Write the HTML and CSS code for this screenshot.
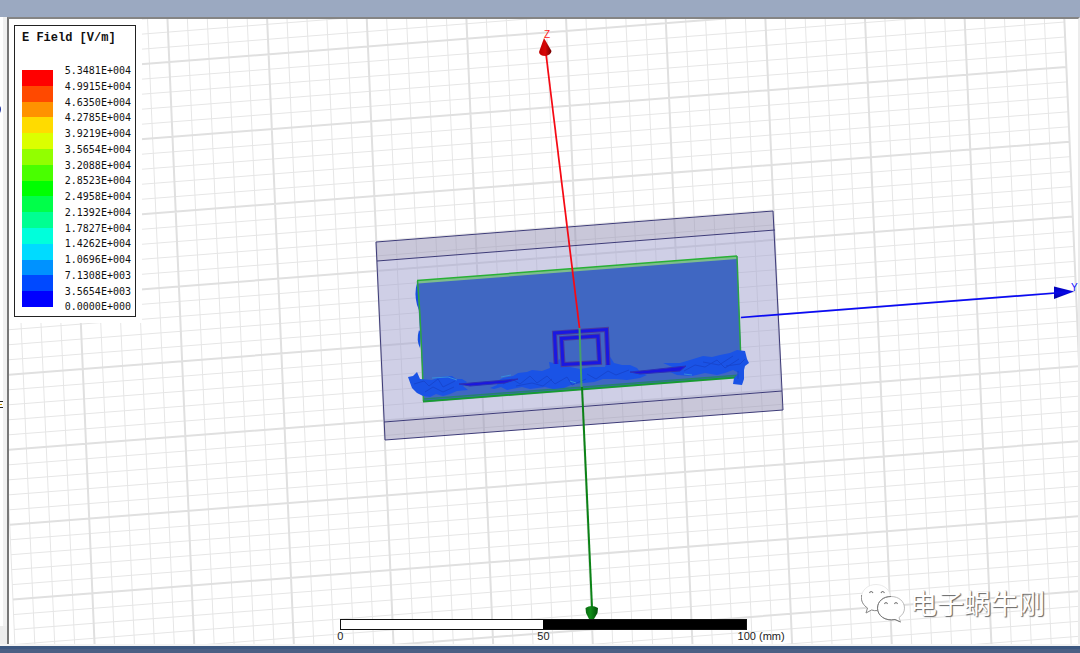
FILE: index.html
```html
<!DOCTYPE html>
<html lang="zh">
<head>
<meta charset="utf-8">
<title>E Field</title>
<link rel="stylesheet" href="styles.css">
</head>
<body>
<div class="app">
  <header class="titlebar"></header>
  <div class="work">
    <aside class="dock">
      <svg class="dock-marks" width="7" height="625" viewBox="0 19 7 625" aria-hidden="true">
        <path d="M0 106q2 3 0 7z" fill="#1c2f9c"/><path d="M0 401.500h3M0 407.500h3" stroke="#222"/><path d="M0 404.500h2" stroke="#c90"/>
        <path d="M0 626h7v18H0z" fill="#ededed"/>
      </svg>
    </aside>
    <main class="viewport">
      <svg class="scene" viewBox="9 19 1069 625" preserveAspectRatio="xMidYMid slice" role="img" aria-label="E field model">
        <defs>
          <linearGradient id="redCone"><stop offset="0" stop-color="#c00000"/><stop offset=".5" stop-color="#d80808"/><stop offset="1" stop-color="#700000"/></linearGradient>
          <linearGradient id="greenCone"><stop offset="0" stop-color="#0a6a10"/><stop offset=".4" stop-color="#108c18"/><stop offset="1" stop-color="#03500a"/></linearGradient>
          <linearGradient id="blueCone" x2="0" y2="1"><stop offset="0" stop-color="#0000b0"/><stop offset=".5" stop-color="#0808e8"/><stop offset="1" stop-color="#000090"/></linearGradient>
        </defs>
        <path id="minor" class="grid-minor"/>
        <path id="major" class="grid-major"/>
        <path fill="#fff" d="M9 19H142V323H9z"/>

        <path d="M376 242L773 211L775 230L377 261z M384 422L782 391L783 410L385 440z" fill="#938fb3" fill-opacity=".5"/>
        <path d="M377 261L775 230L782 391L384 422z" fill="#9f9fcd" fill-opacity=".5"/>
        <path class="box-edge" d="M376 242L773 211L783 410L385 440z M377 261L775 230M384 422L782 391"/>

        <path d="M417 283q-3 10 0 22l2 5v-25z M419 330q-3 10 1 18l1-15z" fill="#164fe0"/>
        <path d="M417 281L737 256L742 377L424 402z" fill="#4067c2"/>
        <path d="M418 282L737 257.500" stroke="#7dbd8c" stroke-width="3" fill="none"/>
        <path d="M417 280.500L737 256" stroke="#28b035" stroke-width="1.500" fill="none"/>
        <path d="M417.500 281Q421 320 423.500 401M737 256L741.500 377" stroke="#2ba442" stroke-width="1.500" fill="none"/>
        <path d="M424 399L741 375" stroke="#267f72" stroke-width="1.500"/>
        <path d="M423 401.500L742 377" stroke="#179b32" stroke-width="2"/>

        <g fill="#1a53e6">
          <path d="M408 377L413 376L417 372L420 379L432 380L440 377L452 376L456 379L462 379L467 382L463 386L468 390L457 391L450 394L443 396L436 394L430 397L423 396L417 393L412 388z"/>
          <path d="M490 388L497 385L499 380L503 378L513 376L518 373L527 372L532 370L542 371L550 368L549 362L554 363L560 359L561 366L570 367L580 369L592 367L605 367L609 355L614 363L622 365L630 365L637 368L641 373L647 375L640 378L627 380L615 379L603 379L594 382L583 383L573 384L564 388L553 389L545 387L530 389L522 387L507 390L501 387L494 389z"/>
          <path d="M663 363L680 363L690 360L703 356L712 357L720 355L730 353L737 350L745 351L747 359L749 363L745 366L744 370L744 379L742 385L733 384L734 378L739 373L733 370L725 373L717 375L705 373L692 376L677 375L670 372L677 369z"/>
        </g>
        <g class="facets">
          <path d="M414 384l10-3 5 5 9-7 5 8 12-6M425 392l8-5 10 5 11-5M503 384l9-5 8 5 10-8 7 7 10-7 8 8 12-7 5 8 14-6M516 386l16-3 11 3 9-7M587 374l9 5 12-8 8 4 13-5M684 371l11-6 10 2 12-7 8 8 14-9M703 362l16 3 14-9M726 366l14-2 5-5M738 379v-8"/>
        </g>
        <path d="M432 378l16-1 9 3M501 377l10-2M570 381l6 2M684 374l8 1" stroke="#378ddb" fill="none"/>
        <path d="M459 384L482 382L518 379L505 383L470 386z M630 372L650 370L686 366L680 371L640 374z" fill="#1b16df" stroke="#2c32b6"/>

        <g fill="none">
          <path class="coil-edge" d="M556 364L554.500 333L606.500 329.500L608 365M563 364.500L561.500 338.500L598 336L599.500 362.500z"/>
          <path class="coil" d="M556 364L554.500 333L606.500 329.500L608 365M563 364.500L561.500 338.500L598 336L599.500 362.500z"/>
        </g>
        <path d="M579.500 328L581.500 387" stroke="#45a069" stroke-width="2"/>
        <path d="M582 387L592 607" stroke="#0b8216" stroke-width="2"/>
        <path d="M585.500 608q6-4 12.500 0l-.500 5-3.500 6h-5l-3-6z" fill="url(#greenCone)"/>
        <path d="M546 54L579.500 328" stroke="#f50a14" stroke-width="1.750"/>
        <path d="M544 38L551.500 51q-.500 4-6 5q-6 0-6.500-4z" fill="url(#redCone)"/>
        <path d="M741 317.500L1056 293" stroke="#0a0af5" stroke-width="1.750"/>
        <path d="M1054 286.500L1074 291.500L1054 299z" fill="url(#blueCone)"/>
        <text class="axis" x="544" y="38" fill="#f22">Z</text>
        <text class="axis" x="1071" y="291" fill="#11f">Y</text>
      </svg>

      <section class="legend">
        <h1 class="legend-title">E Field [V/m]</h1>
        <div class="legend-body">
          <div class="swatches">
            <i class="c1"></i><i class="c2"></i><i class="c3"></i><i class="c4"></i><i class="c5"></i><i class="c6"></i><i class="c7"></i><i class="c8"></i><i class="c9"></i><i class="c10"></i><i class="c11"></i><i class="c12"></i><i class="c13"></i><i class="c14"></i><i class="c15"></i>
          </div>
          <ul class="values">
            <li>5.3481E+004</li><li>4.9915E+004</li><li>4.6350E+004</li><li>4.2785E+004</li><li>3.9219E+004</li><li>3.5654E+004</li><li>3.2088E+004</li><li>2.8523E+004</li><li>2.4958E+004</li><li>2.1392E+004</li><li>1.7827E+004</li><li>1.4262E+004</li><li>1.0696E+004</li><li>7.1308E+003</li><li>3.5654E+003</li><li>0.0000E+000</li>
          </ul>
        </div>
      </section>

      <div class="scale">
        <div class="scale-bar"></div>
        <div class="scale-labels"><span>0</span><span>50</span><span>100&nbsp;(mm)</span></div>
      </div>

      <div class="watermark">
        <svg width="44" height="40" viewBox="861 583 44 40" aria-hidden="true">
          <path d="M876 584.500c-8 0-14.500 5.500-14.500 13 0 4.500 2.300 8 6 10.500l-1.500 5 5.500-3c8 2.500 19-2 19-12.500 0-7.500-6.500-13-14.500-13z" fill="#fff" stroke="#e4e4e4" stroke-width=".8"/>
          <path d="M861.500 595c-1 6 2 10.500 6 13l-1.500 5 5.500-3q3 1 6 .500" fill="none" stroke="#8c8c8c"/>
          <path d="M891 596.500c-8 0-13.500 5-13.500 11.700 0 7.300 7.500 13.300 17.500 11.300l5.500 2.500-1.500-4.500c3.500-2.500 5.500-5.500 5.500-9.300 0-6.700-5.500-11.700-13.500-11.700z" fill="#fff" stroke="#aaa" stroke-width=".8"/>
          <path d="M891 596.500c-8 0-13.500 5-13.500 11.700 0 7.300 7.500 13.300 17.500 11.300l5.500 2.500" fill="none" stroke="#777"/>
          <path d="M869.500 593q1.500-3 3.500 0M881 593q1.500-3 3.500 0M884.500 604q1.500-3 3 0M894.500 604q1.500-3 3 0" fill="#fff" stroke="#777" stroke-width="1.200"/>
        </svg>
        <span>电子蜗牛刚</span>
      </div>
    </main>
  </div>
  <footer class="taskbar"></footer>
</div>
<script src="grid.js"></script>
</body>
</html>
```

FILE: grid.js
```js
// Ground-plane grid: two families of slanted lines, every fifth one is major.
function drawGrid() {
  const SLOPE_H = -0.0782, SLOPE_V = 0.0428;
  const DX = 19.93, DY = 15.01, X0 = 67, Y0 = 450.5;
  const cross = (x0, y0) => {
    const y = (y0 + SLOPE_H * x0) / (1 - SLOPE_H * SLOPE_V);
    return [x0 + SLOPE_V * y, y].map(n => n.toFixed(2)).join(" ");
  };
  let minor = "", major = "";
  const add = (i, a, b) => {
    const d = "M" + a + "L" + b;
    if (i % 5 === 0) major += d; else minor += d;
  };
  const xMin = X0 - 4 * DX, xMax = X0 + 50 * DX;
  const yMin = Y0 - 32 * DY, yMax = Y0 + 20 * DY;
  for (let i = -4; i <= 50; i++) add(i, cross(X0 + i * DX, yMin), cross(X0 + i * DX, yMax));
  for (let j = -30; j <= 20; j++) add(j, cross(xMin, Y0 + j * DY), cross(xMax, Y0 + j * DY));
  document.getElementById("minor").setAttribute("d", minor);
  document.getElementById("major").setAttribute("d", major);
}
drawGrid();
```

FILE: styles.css
```css
* { box-sizing: border-box; }
body { margin: 0; background: #fff; font-family: "Liberation Sans", Arial, sans-serif; }
.app { display: flex; flex-direction: column; height: 100vh; }
.titlebar { height: 17px; background: #9ba9c1; flex: none; }
.work { flex: 1; min-height: 0; display: flex; }
.dock { width: 7px; flex: none; background: linear-gradient(90deg, #fff 3px, #f0f0f0 3px); overflow: hidden; padding-top: 2px; }
.dock-marks { display: block; }
.viewport {
  position: relative; flex: 1; min-width: 0; overflow: hidden;
  border-top: 2px solid #858585; border-left: 2px solid #777;
  border-right: 2px solid #ececec; background: #fff;
}
.scene { display: block; width: 100%; height: 100%; }
.taskbar { height: 9px; flex: none; background: #4b5f84; border-top: 2px solid #f4f4f4; box-shadow: inset 0 3px #3c5780; }

.grid-minor { fill: none; stroke: #e6e6e6; stroke-width: 1; }
.grid-major { fill: none; stroke: #e0e0e0; stroke-width: 2; }
.box-edge { fill: none; stroke: #3d3b78; stroke-width: 1; }
.facets { fill: none; stroke: #1746cf; stroke-width: 1; }
.coil-edge { stroke: #473c9f; stroke-width: 5; }
.coil { stroke: #1a17e2; stroke-width: 3; }
.axis { font: 10px "Liberation Sans", Arial, sans-serif; }

.legend {
  position: absolute; left: 5px; top: 6px; width: 122px; height: 292px;
  padding: 5px 4px 0 7px; border: 1px solid #222; background: #fff; color: #111;
}
.legend-title { margin: 0; font: bold 12px/14px "Liberation Mono", monospace; white-space: nowrap; }
.legend-body { display: flex; justify-content: space-between; margin-top: 18px; }
.swatches { display: flex; flex-direction: column; width: 31px; height: 237px; margin-top: 7px; }
.swatches i { flex: 1; }
.values { display: flex; flex-direction: column; height: 252px; margin: 0; padding: 0; list-style: none; font: 10px/16px "DejaVu Sans Mono", monospace; }
.values li { flex: 1; min-height: 0; }
.c1 { background: #ff0000; } .c2 { background: #ff4900; } .c3 { background: #ff9200; }
.c4 { background: #ffdb00; } .c5 { background: #dbff00; } .c6 { background: #92ff00; }
.c7 { background: #49ff00; } .c8 { background: #00ff00; } .c9 { background: #00ff49; }
.c10 { background: #00ff92; } .c11 { background: #00ffdb; } .c12 { background: #00dbff; }
.c13 { background: #0092ff; } .c14 { background: #0049ff; } .c15 { background: #0000ff; }

.scale { position: absolute; left: 31%; bottom: 1px; width: 38%; color: #222; font-size: 11px; line-height: 13px; }
.scale-bar { height: 11px; border: 1px solid #111; background: linear-gradient(90deg, #fff 50%, #000 50%); }
.scale-labels { display: flex; justify-content: space-between; }
.scale-labels span { width: 0; display: flex; justify-content: center; white-space: nowrap; }
.scale-labels span:last-child { justify-content: flex-start; text-indent: -9px; }

.watermark { position: absolute; right: 33px; bottom: 21px; display: flex; align-items: center; gap: 5px; }
.watermark span {
  font: 27px/38px "Noto Sans CJK SC", sans-serif; color: #fff;
  text-shadow: 1px 1px 1px #666, 1px 0 0 #aaa;
}
```
